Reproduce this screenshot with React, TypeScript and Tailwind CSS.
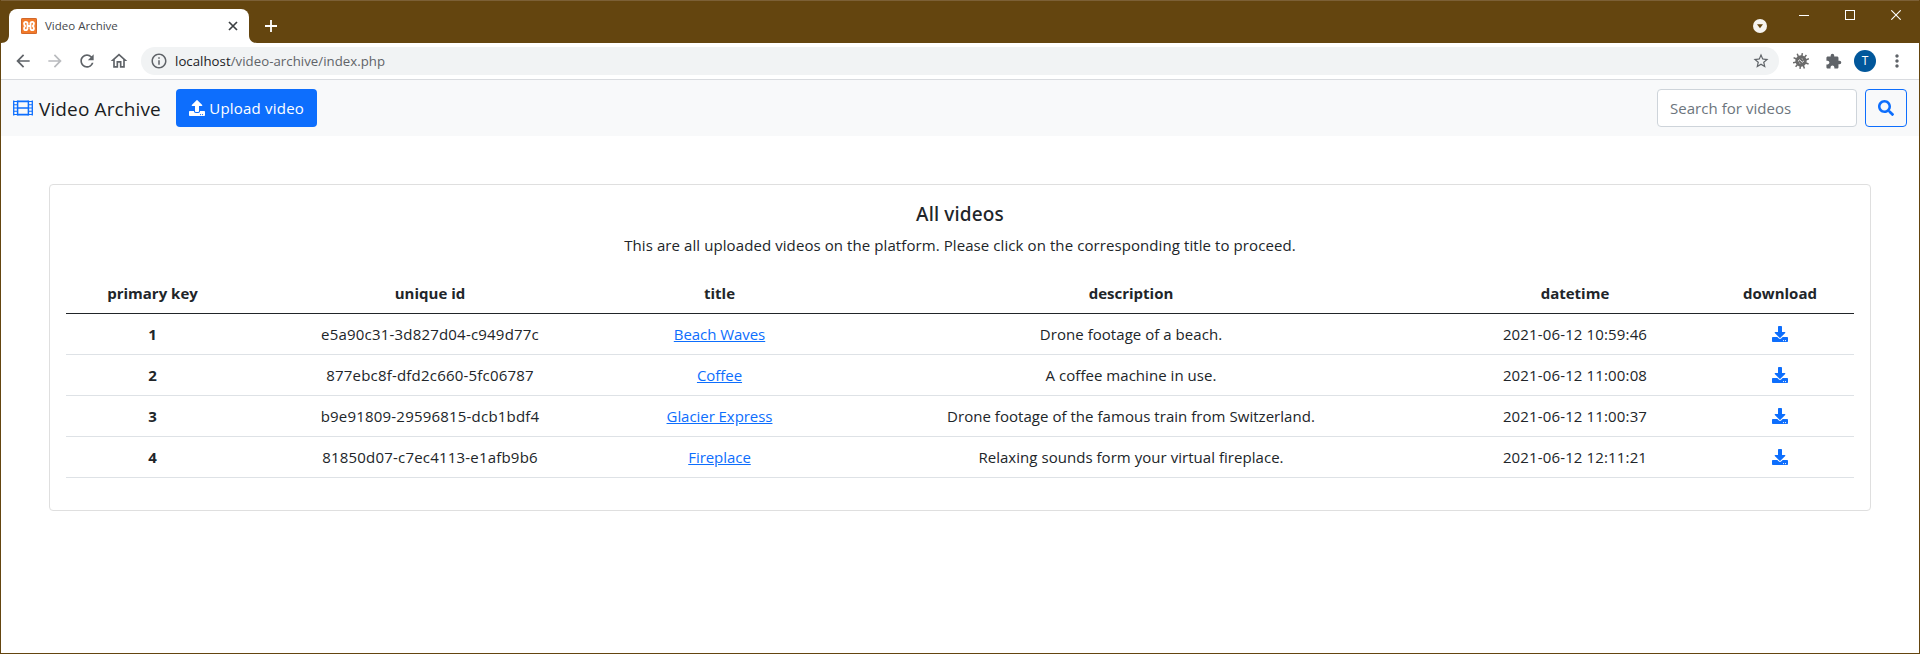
import {
  MdArrowBack,
  MdArrowForward,
  MdExtension,
  MdInfoOutline,
  MdMoreVert,
  MdOutlineHome,
  MdRefresh,
  MdStarBorder,
} from "react-icons/md";
import { FaDownload, FaSearch, FaUpload } from "react-icons/fa";

type Video = {
  key: number;
  uid: string;
  title: string;
  description: string;
  datetime: string;
};

const videos: Video[] = [
  { key: 1, uid: "e5a90c31-3d827d04-c949d77c", title: "Beach Waves", description: "Drone footage of a beach.", datetime: "2021-06-12 10:59:46" },
  { key: 2, uid: "877ebc8f-dfd2c660-5fc06787", title: "Coffee", description: "A coffee machine in use.", datetime: "2021-06-12 11:00:08" },
  { key: 3, uid: "b9e91809-29596815-dcb1bdf4", title: "Glacier Express", description: "Drone footage of the famous train from Switzerland.", datetime: "2021-06-12 11:00:37" },
  { key: 4, uid: "81850d07-c7ec4113-e1afb9b6", title: "Fireplace", description: "Relaxing sounds form your virtual fireplace.", datetime: "2021-06-12 12:11:21" },
];

function Favicon() {
  return (
    <svg width="16" height="16" viewBox="0 0 16 16">
      <rect width="16" height="16" rx="1.5" fill="#f27a2a" />
      <rect x="0.5" y="0.5" width="15" height="15" rx="1" fill="none" stroke="#d0682c" />
      <g fill="none" stroke="#fff" strokeWidth="1.9" strokeLinecap="round" strokeLinejoin="round">
        <path d="M6.5 6.6V5.4C6.5 3.4 3.1 3.4 3.1 5.6C3.1 6.8 3.5 7.5 4.3 8C3.5 8.5 3.1 9.2 3.1 10.4C3.1 12.6 6.5 12.6 6.5 10.6V9.4" />
        <path d="M9.5 6.6V5.4C9.5 3.4 12.9 3.4 12.9 5.6C12.9 6.8 12.5 7.5 11.7 8C12.5 8.5 12.9 9.2 12.9 10.4C12.9 12.6 9.5 12.6 9.5 10.6V9.4" />
        <path d="M6.4 8H9.6" />
      </g>
    </svg>
  );
}

function FilmIcon() {
  return (
    <svg width="20" height="16" viewBox="0 0 20 16" fill="none" stroke="#0d6efd">
      <path d="M0.7 0.5V15.5M19.3 0.5V15.5" strokeWidth="1.3" />
      <path d="M4.6 0.5V15.5M15.4 0.5V15.5" strokeWidth="1.5" />
      <path d="M4.5 1.4H15.5M4.5 8H15.5M4.5 14.6H15.5" strokeWidth="1.6" />
      <path d="M1 1.5H4.5M1 4.8H4.5M1 8H4.5M1 11.2H4.5M1 14.5H4.5" strokeWidth="1.1" />
      <path d="M15.5 1.5H19M15.5 4.8H19M15.5 8H19M15.5 11.2H19M15.5 14.5H19" strokeWidth="1.1" />
    </svg>
  );
}

function BugIcon() {
  return (
    <svg width="16" height="16" viewBox="0 0 16 16" fill="none" stroke="#6b6b6b">
      <circle cx="8" cy="8" r="5.7" fill="#6b6b6b" stroke="none" />
      <path
        d="M9.4 0.2L8.6 4M13.4 2L11 5M15.9 5.8L12 7.2M15.6 11L12 9.8M11.4 15.4L10.2 12M7 15.9L7.5 12M2.6 13.8L5 11M0 9.8L4 8.9M0.6 4.6L4 6.2M4.2 0.8L5.6 4"
        strokeWidth="1.5"
      />
      <path d="M5.4 8.4C5.4 6.8 6.6 6.4 7.4 7.4L8.6 8.8C9.2 9.6 10.4 9.2 10.6 7.8M7.2 10.4L6.4 9.9M8.8 5.7L9.6 6.2" stroke="#fff" strokeWidth="0.9" />
    </svg>
  );
}

function TitleBar() {
  return (
    <div className="flex h-[43px] border-t border-[#7c6036] bg-[#64450f]">
      <div className="flex w-2 items-end">
        <svg width="8" height="8" viewBox="0 0 8 8">
          <path d="M8 0V8H0C5 8 8 5 8 0Z" fill="#fff" />
        </svg>
      </div>
      <div className="mt-2 flex w-[240px] items-center rounded-t-lg bg-white pr-[11px] pl-3">
        <Favicon />
        <span className="ml-2 text-[11.5px] leading-4 text-[#45484c]">Video Archive</span>
        <svg className="ml-auto" width="10" height="10" viewBox="0 0 10 10">
          <path d="M1 1L9 9M9 1L1 9" stroke="#3c4043" strokeWidth="1.7" />
        </svg>
      </div>
      <div className="flex w-2 items-end">
        <svg width="8" height="8" viewBox="0 0 8 8">
          <path d="M0 0V8H8C3 8 0 5 0 0Z" fill="#fff" />
        </svg>
      </div>
      <div className="mt-2 ml-2 flex items-center">
        <svg width="12" height="12" viewBox="0 0 12 12">
          <path d="M6 0V12M0 6H12" stroke="#fff" strokeWidth="1.8" />
        </svg>
      </div>
      <div className="ml-auto flex">
        <div className="mt-2 mr-[14px] flex items-center">
          <svg width="14" height="14" viewBox="0 0 14 14">
            <circle cx="7" cy="7" r="7" fill="#f5f3f0" />
            <path d="M4 5.2H10L7 9.2Z" fill="#64450f" />
          </svg>
        </div>
        <div className="flex h-7 w-[46px] items-center justify-center">
          <svg width="10" height="10" viewBox="0 0 10 10">
            <path d="M0 5.5H10" stroke="#fff" />
          </svg>
        </div>
        <div className="flex h-7 w-[46px] items-center justify-center">
          <svg width="10" height="10" viewBox="0 0 10 10">
            <rect x="0.5" y="0.5" width="9" height="9" fill="none" stroke="#fff" />
          </svg>
        </div>
        <div className="flex h-7 w-[46px] items-center justify-center">
          <svg width="10" height="10" viewBox="0 0 10 10">
            <path d="M0.3 0.3L9.7 9.7M9.7 0.3L0.3 9.7" stroke="#fff" strokeWidth="1.1" />
          </svg>
        </div>
      </div>
    </div>
  );
}

const cell = "flex w-8 justify-center";

function Toolbar() {
  return (
    <div className="flex h-[37px] items-center border-b border-[#d9dbdf] bg-white pr-[6px] pl-[6px] text-[#5f6368]">
      <div className={cell}><MdArrowBack size={20} /></div>
      <div className={cell}><MdArrowForward size={20} className="text-[#b9bbbe]" /></div>
      <div className={cell}><MdRefresh size={20} /></div>
      <div className={cell}><MdOutlineHome size={20} /></div>
      <div className="ml-[6px] flex h-7 flex-1 items-center rounded-full bg-[#f1f3f4] pr-[9px] pl-[9px]">
        <MdInfoOutline size={18} />
        <span className="ml-[7px] text-[13.2px] leading-5 tracking-[0.05px]">
          <span className="text-[#202124]">localhost</span>/video-archive/index.php
        </span>
        <MdStarBorder size={18} className="ml-auto" />
      </div>
      <div className="ml-[6px] flex items-center">
        <div className={cell}><BugIcon /></div>
        <div className={cell}><MdExtension size={17} /></div>
        <div className={cell}>
          <div className="flex size-[22px] items-center justify-center rounded-full bg-[#01579b] text-[12px] leading-none text-white">T</div>
        </div>
        <div className={cell}><MdMoreVert size={20} /></div>
      </div>
    </div>
  );
}

function Navbar() {
  return (
    <nav className="flex h-14 items-center bg-[#f8f9fa] px-3">
      <FilmIcon />
      <span className="ml-[6px] pt-0.5 text-[19px] leading-7 tracking-[0.12px] text-[#1b1d1f]">Video Archive</span>
      <button className="ml-[15px] flex h-[38px] w-[141px] items-center rounded bg-[#0d6efd] pl-[13px] text-white">
        <FaUpload size={16} />
        <span className="ml-[4.5px] text-[15px] tracking-[0.2px]">Upload video</span>
      </button>
      <input
        className="ml-auto h-[38px] w-[200px] rounded border border-[#ced4da] bg-white px-3 text-[15px] tracking-[0.04px] placeholder:text-[#6c757d]"
        placeholder="Search for videos"
      />
      <button className="ml-2 flex h-[38px] w-[42px] items-center justify-center rounded border border-[#0d6efd] text-[#0d6efd]">
        <FaSearch size={16} />
      </button>
    </nav>
  );
}

const headCell = "h-[41px] border-b border-[#212529] p-0 font-bold";
const bodyCell = "h-[41px] border-b border-[#dee2e6] p-0";

function VideoTable() {
  return (
    <table className="w-full table-fixed border-separate border-spacing-0 text-center text-[15px] leading-6">
      <colgroup>
        <col className="w-[173px]" />
        <col className="w-[382px]" />
        <col className="w-[197px]" />
        <col className="w-[626px]" />
        <col className="w-[262px]" />
        <col className="w-[148px]" />
      </colgroup>
      <thead>
        <tr>
          <th className={headCell}>primary key</th>
          <th className={headCell}>unique id</th>
          <th className={headCell}>title</th>
          <th className={headCell}>description</th>
          <th className={headCell}>datetime</th>
          <th className={headCell}>download</th>
        </tr>
      </thead>
      <tbody>
        {videos.map((v) => (
          <tr key={v.key}>
            <th className={`${bodyCell} font-bold`}>{v.key}</th>
            <td className={`${bodyCell} tracking-[0.2px]`}>{v.uid}</td>
            <td className={`${bodyCell} tracking-[-0.05px]`}>
              <a href="#" className="text-[#0d6efd] underline">{v.title}</a>
            </td>
            <td className={`${bodyCell} tracking-[0.04px]`}>{v.description}</td>
            <td className={`${bodyCell} tracking-[0.14px]`}>{v.datetime}</td>
            <td className={bodyCell}>
              <FaDownload size={16} className="mx-auto text-[#0d6efd]" />
            </td>
          </tr>
        ))}
      </tbody>
    </table>
  );
}

export default function App() {
  return (
    <div className="flex h-[654px] w-[1920px] flex-col overflow-hidden border-x border-b border-[#64450f] bg-white font-['Open_Sans','Noto_Sans',sans-serif] text-[#212529]">
      <TitleBar />
      <Toolbar />
      <Navbar />
      <main className="mx-12 mt-12 h-[327px] rounded border border-[#dfdfdf] px-4 pt-[17px]">
        <h5 className="text-center font-['Noto_Sans',sans-serif] text-[19px] leading-6 font-medium tracking-[0.15px]">All videos</h5>
        <p className="mt-[7px] mb-4 text-center text-[15px] leading-6 tracking-[0.085px]">
          This are all uploaded videos on the platform. Please click on the corresponding title to proceed.
        </p>
        <VideoTable />
      </main>
    </div>
  );
}
